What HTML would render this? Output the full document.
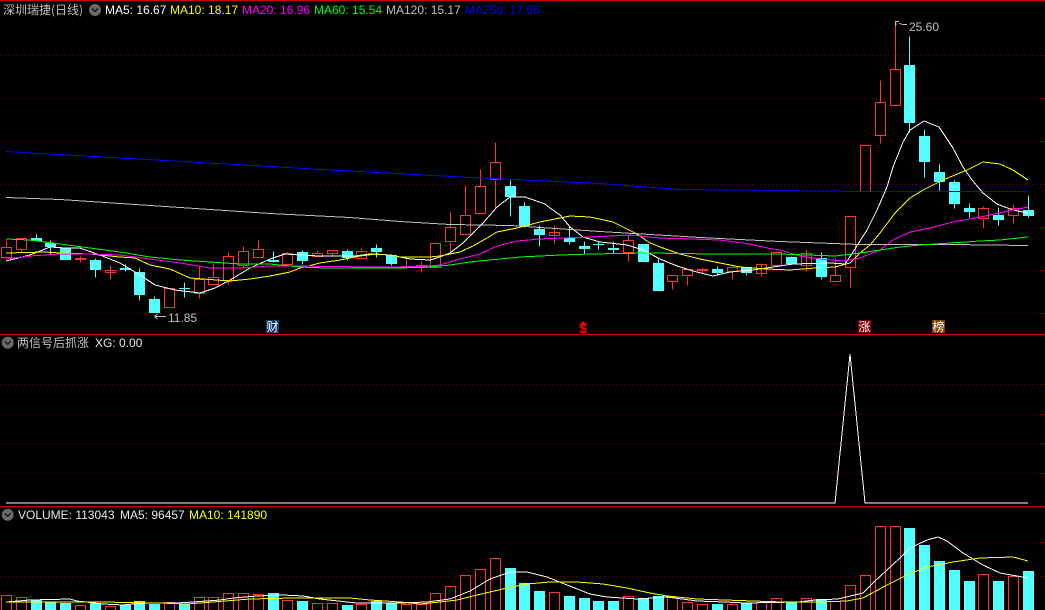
<!DOCTYPE html>
<html>
<head>
<meta charset="utf-8">
<style>
html,body{margin:0;padding:0;background:#000;width:1045px;height:610px;overflow:hidden}
#w{position:relative;width:1045px;height:610px;background:#000;overflow:hidden}
svg{position:absolute;left:0;top:0}
.t{position:absolute;font:12px/14px "Liberation Sans",sans-serif;white-space:pre}
.c{position:absolute;font:12px/14px "WenQuanYi Zen Hei","Noto Sans CJK SC","Liberation Sans",sans-serif;white-space:pre;color:#c0c0c0}
.l{position:absolute;width:13px;height:13px;top:320px;font:12px/13px "WenQuanYi Zen Hei","Noto Sans CJK SC",sans-serif;color:#fff;text-align:center}
</style>
</head>
<body>
<div id="w">
<svg width="1045" height="610" viewBox="0 0 1045 610" fill="none" shape-rendering="crispEdges">
<!-- separators -->
<path d="M0 .5H1045M0 334.5H1045M0 506.5H1045" stroke="#c80000"/>
<!-- grid -->
<path d="M0 55.5H1045M0 98.5H1045M0 141.5H1045M0 184.5H1045M0 227.5H1045M0 270.5H1045M0 313.5H1045M0 384.5H1045M0 414.5H1045M0 443.5H1045M0 473.5H1045M0 542.5H1045M0 576.5H1045" stroke="#800000" stroke-dasharray="1 3"/>
<!-- red candles -->
<path stroke="#ff3232" d="M6.5 240.5V247.5M1.5 247.5h10v10h-10z
M21.5 249.5V252.5M16.5 238.5h10v11h-10z
M80.5 256.5V262.5M75.5 258.5h10v1h-10z
M110.5 265.5V279.5M105.5 270.5h10v2h-10z
M164.5 288.5h10v19h-10z
M199.5 265.5V279.5M199.5 293.5V298.5M194.5 279.5h10v14h-10z
M213.5 263.5V277.5M208.5 277.5h10v7h-10z
M228.5 252.5V256.5M228.5 280.5V284.5M223.5 256.5h10v24h-10z
M243.5 246.5V251.5M243.5 265.5V267.5M238.5 251.5h10v14h-10z
M258.5 240.5V249.5M253.5 249.5h10v8h-10z
M287.5 252.5V253.5M282.5 253.5h10v11h-10z
M317.5 250.5V253.5M312.5 253.5h10v3h-10z
M332.5 253.5V256.5M327.5 250.5h10v3h-10z
M361.5 248.5V251.5M356.5 251.5h10v7h-10z
M406.5 259.5V266.5M401.5 266.5h10v1h-10z
M421.5 261.5V272.5M416.5 265.5h10v2h-10z
M435.5 242.5V243.5M430.5 243.5h10v24h-10z
M450.5 212.5V227.5M450.5 242.5V252.5M445.5 227.5h10v14h-10z
M465.5 185.5V215.5M460.5 215.5h10v19h-10z
M480.5 169.5V186.5M475.5 186.5h10v27h-10z
M495.5 142.5V162.5M495.5 180.5V207.5M490.5 162.5h10v17h-10z
M554.5 225.5V243.5M549.5 232.5h10v3h-10z
M628.5 235.5V240.5M628.5 253.5V261.5M623.5 240.5h10v12h-10z
M672.5 281.5V289.5M667.5 275.5h10v6h-10z
M687.5 276.5V285.5M682.5 269.5h10v6h-10z
M702.5 267.5V273.5M697.5 269.5h10v1h-10z
M732.5 272.5V279.5M727.5 267.5h10v4h-10z
M761.5 263.5V276.5M756.5 264.5h10v9h-10z
M776.5 251.5V252.5M771.5 252.5h10v13h-10z
M806.5 249.5V271.5M801.5 253.5h10v12h-10z
M835.5 258.5V275.5M830.5 275.5h10v6h-10z
M850.5 267.5V287.5M845.5 216.5h10v51h-10z
M860.5 145.5h10v46h-10z
M880.5 80.5V102.5M880.5 136.5V143.5M875.5 102.5h10v33h-10z
M895.5 22.5V69.5M890.5 69.5h10v36h-10z
M983.5 206.5V208.5M983.5 219.5V228.5M978.5 208.5h10v10h-10z
M1013.5 204.5V208.5M1013.5 216.5V223.5M1008.5 208.5h10v7h-10z"/>
<!-- cyan wicks -->
<path stroke="#54ffff" d="M36.5 234.5V241.5M50.5 240.5V254.5M95.5 258.5V277.5M125.5 264.5V271.5M139.5 268.5V300.5M154.5 296.5V299.5M184.5 282.5V297.5M273.5 251.5V262.5M302.5 250.5V264.5M347.5 249.5V260.5M376.5 244.5V257.5M391.5 254.5V265.5M510.5 180.5V216.5M524.5 202.5V227.5M539.5 225.5V246.5M569.5 226.5V244.5M584.5 241.5V254.5M598.5 241.5V249.5M613.5 241.5V253.5M658.5 258.5V263.5M717.5 266.5V275.5M746.5 273.5V275.5M791.5 256.5V257.5M821.5 252.5V279.5M909.5 36.5V132.5M924.5 129.5V177.5M939.5 164.5V191.5M954.5 180.5V208.5M969.5 203.5V217.5M998.5 207.5V225.5M1028.5 195.5V217.5"/>
<!-- cyan bodies -->
<path fill="#54ffff" d="M31 238h11v3h-11zM45 243h11v4h-11zM60 248h11v12h-11zM90 260h11v10h-11zM120 268h11v2h-11zM134 272h11v23h-11zM149 299h11v14h-11zM179 288h11v1h-11zM268 260h11v2h-11zM297 252h11v9h-11zM342 251h11v7h-11zM371 248h11v4h-11zM386 255h11v9h-11zM505 186h11v11h-11zM519 206h11v20h-11zM534 229h11v6h-11zM564 238h11v4h-11zM579 246h11v3h-11zM593 244h11v1h-11zM608 248h11v2h-11zM638 244h11v18h-11zM653 263h11v28h-11zM712 269h11v4h-11zM741 267h11v6h-11zM786 257h11v7h-11zM816 258h11v19h-11zM904 65h11v58h-11zM919 136h11v26h-11zM934 172h11v10h-11zM949 182h11v22h-11zM964 208h11v4h-11zM993 215h11v5h-11zM1023 210h11v6h-11z"/>
<!-- MA lines -->
<polyline stroke="#0000ff" points="6,151.5 340,170.5 470,177.5 535,180.5 600,183.5 680,189.5 780,190.5 860,191.5 1028,191.5"/>
<polyline stroke="#c0c0c0" points="6,197.5 60,199.5 270,213.5 350,217.5 400,221.5 450,224.5 510,225.5 600,231.5 650,234.5 700,237.5 780,241.5 860,244.5 950,244.5 1028,245.5"/>
<polyline stroke="#ffffff" points="6,261 30,255 50,247 65,248 80,248 100,255 120,263 140,275 155,285 175,290 200,293 215,288 230,280 250,268 270,259 285,254 300,255 320,256 355,256 370,254 390,255 410,259 430,260 437,258 450,253 463,243 483,223 497,207 510,197 525,197 545,204 550,208 560,215 570,227 583,237 600,242 627,245 643,250 660,259 677,266 693,271 713,276 730,272 753,270 773,267 793,264 830,263 845,264 853,252 867,230 877,210 887,187 893,167 903,142 910,130 924,121 939,127 953,148 963,167 972,180 983,193 997,204 1013,210 1028,213"/>
<polyline stroke="#ffff00" points="6,253 45,252 60,253 90,254 120,257 135,258 150,265 170,269 190,278 230,281 250,279 270,276 290,272 300,268 320,263 340,260 360,256 376,254 390,255 400,257 430,257 440,256 460,252 473,246 487,238 497,232 517,228 540,222 560,218 570,216 590,217 613,222 623,227 633,232 640,236 650,243 663,248 680,254 700,259 720,263 740,267 767,269 790,270 815,268 835,267 850,263 860,253 870,245 880,233 895,213 910,198 923,190 943,180 967,170 983,162 1000,164 1013,170 1028,180"/>
<polyline stroke="#ff00ff" points="6,259 30,256 60,254 90,254 120,255 150,259 180,263 210,268 240,268 270,266 295,266 370,267 400,267 430,266 440,265 460,259 480,254 497,246 517,241 540,239 560,238 590,237 630,235 660,238 720,240 750,244 767,248 780,250 800,256 820,259 843,261 860,258 880,250 893,240 910,232 930,228 953,222 980,217 1013,210 1028,207"/>
<polyline stroke="#00ff00" points="6,239 30,240 60,244 90,248 120,252 150,257 180,260 210,262 240,264 270,264 300,267 325,268 400,268 430,267 450,265 470,262 500,259 520,257 560,255 590,254 650,253 710,254 780,254 835,256 860,253 880,250 900,247 920,245 950,243 980,241 1000,240 1028,237"/>
<!-- XG line -->
<polyline stroke="#ffffff" points="6,503 835,503 850,354 865,503 1028,503"/>
<!-- volume: red -->
<path stroke="#ff3232" d="M1.5 595.5h10V615h-10zM16.5 597.5h10V615h-10zM75.5 605.5h10V615h-10zM105.5 606.5h10V615h-10zM164.5 602.5h10V615h-10zM194.5 597.5h10V615h-10zM208.5 597.5h10V615h-10zM223.5 593.5h10V615h-10zM238.5 593.5h10V615h-10zM253.5 594.5h10V615h-10zM282.5 600.5h10V615h-10zM312.5 603.5h10V615h-10zM327.5 603.5h10V615h-10zM356.5 604.5h10V615h-10zM401.5 604.5h10V615h-10zM416.5 604.5h10V615h-10zM430.5 593.5h10V615h-10zM445.5 586.5h10V615h-10zM460.5 575.5h10V615h-10zM475.5 569.5h10V615h-10zM490.5 558.5h10V615h-10zM549.5 592.5h10V615h-10zM623.5 596.5h10V615h-10zM667.5 597.5h10V615h-10zM682.5 602.5h10V615h-10zM697.5 604.5h10V615h-10zM727.5 604.5h10V615h-10zM756.5 602.5h10V615h-10zM771.5 598.5h10V615h-10zM801.5 598.5h10V615h-10zM830.5 601.5h10V615h-10zM845.5 585.5h10V615h-10zM860.5 575.5h10V615h-10zM875.5 526.5h10V615h-10zM890.5 526.5h10V615h-10zM978.5 574.5h10V615h-10zM1008.5 576.5h10V615h-10z"/>
<!-- volume: cyan -->
<path fill="#54ffff" d="M31 600h11v10h-11zM45 602h11v8h-11zM60 603h11v7h-11zM90 603h11v7h-11zM120 605h11v5h-11zM134 601h11v9h-11zM149 604h11v6h-11zM179 604h11v6h-11zM268 593h11v17h-11zM297 601h11v9h-11zM342 605h11v5h-11zM371 601h11v9h-11zM386 603h11v7h-11zM505 568h11v42h-11zM519 583h11v27h-11zM534 591h11v19h-11zM564 596h11v14h-11zM579 598h11v12h-11zM593 601h11v9h-11zM608 601h11v9h-11zM638 598h11v12h-11zM653 596h11v14h-11zM712 604h11v6h-11zM741 603h11v7h-11zM786 602h11v8h-11zM816 599h11v11h-11zM904 528h11v82h-11zM919 545h11v65h-11zM934 561h11v49h-11zM949 570h11v40h-11zM964 581h11v29h-11zM993 581h11v29h-11zM1023 571h11v39h-11z"/>
<polyline stroke="#ffffff" points="6,602 30,600 70,599 77,601 103,604 123,605 133,604 150,603 177,603 193,602 220,600 233,598 257,596 283,595 303,596 320,599 347,602 357,603 400,603 427,602 450,599 470,591 490,579 510,572 527,572 547,577 567,585 590,594 607,597 637,599 667,597 697,601 725,602 745,603 798,602 815,600 838,599 863,593 873,583 887,570 900,558 910,548 927,540 938,537 947,541 963,553 983,565 1000,573 1028,578"/>
<polyline stroke="#ffff00" points="6,602 100,602 160,603 187,604 213,602 250,599 293,598 333,598 350,598 370,600 400,602 420,604 440,602 457,600 473,596 490,592 507,588 527,584 550,582 577,582 603,584 627,588 650,593 667,596 697,599 753,601 783,602 820,602 847,601 863,598 887,585 907,575 927,567 953,562 980,558 1013,557 1028,561"/>
<!-- annotations -->
<path stroke="#c0c0c0" d="M154.5 316.5H166M154.5 316.5L157.5 314M154.5 316.5L157.5 319"/>
<path stroke="#c0c0c0" d="M895.5 26V21.5H899M895.5 24H897M899 23.5L903 24.5H907"/>
<!-- $ arrow -->
<path fill="#ff0000" d="M583 321l4 4h-8z"/>
<!-- header icons -->
<g shape-rendering="auto">
<circle cx="95" cy="10" r="6" fill="#6a6a6a"/><path d="M92 8.5l3 3 3-3" stroke="#111" stroke-width="1.3"/>
<circle cx="7.7" cy="342.7" r="6" fill="#6a6a6a"/><path d="M4.7 341.2l3 3 3-3" stroke="#111" stroke-width="1.3"/>
<circle cx="7.7" cy="514.7" r="6" fill="#6a6a6a"/><path d="M4.7 513.2l3 3 3-3" stroke="#111" stroke-width="1.3"/>
</g>
</svg>

<div class="c" style="left:3px;top:3px">深圳瑞捷(日线)</div>
<div class="t" style="left:105px;top:3px;color:#fff">MA5: 16.67</div>
<div class="t" style="left:170px;top:3px;color:#ff0">MA10: 18.17</div>
<div class="t" style="left:242px;top:3px;color:#f0f">MA20: 16.96</div>
<div class="t" style="left:314px;top:3px;color:#0f0">MA60: 15.54</div>
<div class="t" style="left:386px;top:3px;color:#c0c0c0">MA120: 15.17</div>
<div class="t" style="left:465px;top:3px;color:#00f">MA250: 17.66</div>

<div class="c" style="left:17px;top:336px">两信号后抓涨</div>
<div class="t" style="left:95px;top:336px;color:#e8e8e8">XG: 0.00</div>

<div class="t" style="left:18px;top:508px;color:#e8e8e8">VOLUME: 113043</div>
<div class="t" style="left:120px;top:508px;color:#e8e8e8">MA5: 96457</div>
<div class="t" style="left:189px;top:508px;color:#ff0">MA10: 141890</div>

<div class="t" style="left:168px;top:311px;color:#c0c0c0">11.85</div>
<div class="t" style="left:909px;top:20px;color:#c0c0c0">25.60</div>

<div class="l" style="left:266px;background:#0b3c6e">财</div>
<div class="l" style="left:858px;background:#800000">涨</div>
<div class="l" style="left:932px;background:#804000">榜</div>
<div class="t" style="left:578px;top:323px;color:#f00;font-weight:bold;font-size:14px;width:10px;text-align:center;line-height:11px">$</div>
</div>
</body>
</html>
